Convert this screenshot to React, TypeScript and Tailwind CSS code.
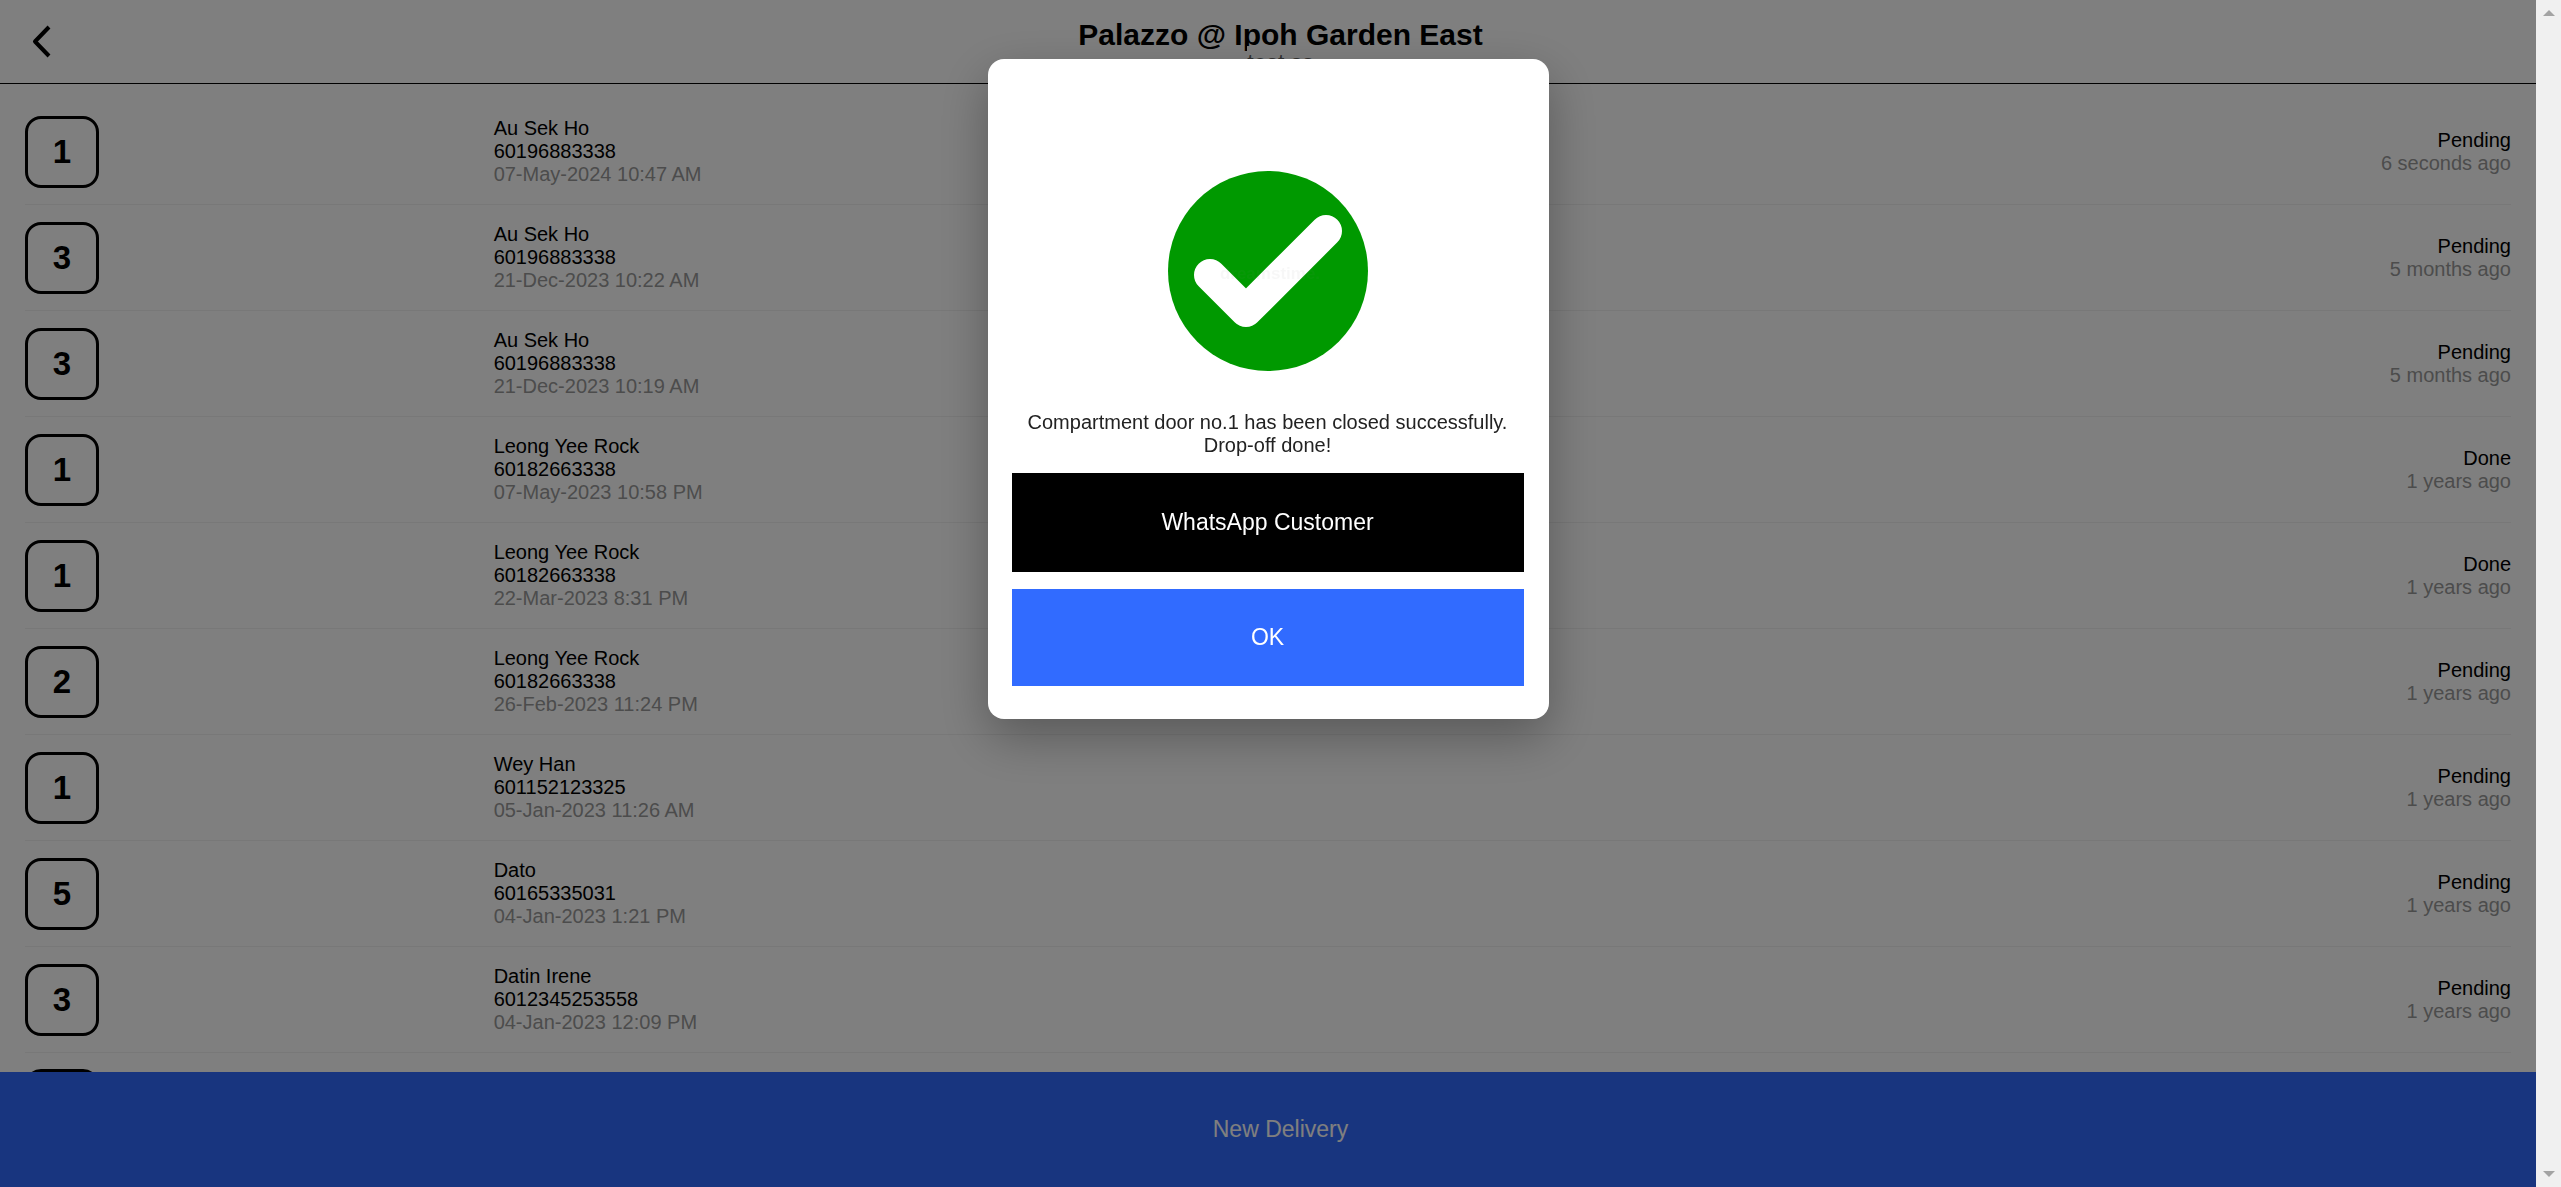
const deliveries = [
  { door: 1, name: 'Au Sek Ho', phone: '60196883338', date: '07-May-2024 10:47 AM', status: 'Pending', ago: '6 seconds ago' },
  { door: 3, name: 'Au Sek Ho', phone: '60196883338', date: '21-Dec-2023 10:22 AM', status: 'Pending', ago: '5 months ago' },
  { door: 3, name: 'Au Sek Ho', phone: '60196883338', date: '21-Dec-2023 10:19 AM', status: 'Pending', ago: '5 months ago' },
  { door: 1, name: 'Leong Yee Rock', phone: '60182663338', date: '07-May-2023 10:58 PM', status: 'Done', ago: '1 years ago' },
  { door: 1, name: 'Leong Yee Rock', phone: '60182663338', date: '22-Mar-2023 8:31 PM', status: 'Done', ago: '1 years ago' },
  { door: 2, name: 'Leong Yee Rock', phone: '60182663338', date: '26-Feb-2023 11:24 PM', status: 'Pending', ago: '1 years ago' },
  { door: 1, name: 'Wey Han', phone: '601152123325', date: '05-Jan-2023 11:26 AM', status: 'Pending', ago: '1 years ago' },
  { door: 5, name: 'Dato', phone: '60165335031', date: '04-Jan-2023 1:21 PM', status: 'Pending', ago: '1 years ago' },
  { door: 3, name: 'Datin Irene', phone: '6012345253558', date: '04-Jan-2023 12:09 PM', status: 'Pending', ago: '1 years ago' },
];

function Header() {
  return (
    <header className="relative h-21 shrink-0 w-screen border-b border-black bg-white text-center">
      <button aria-label="Back" className="absolute left-7 top-6 cursor-pointer">
        <svg width="28" height="36" viewBox="0 0 28 36" fill="none" stroke="#000" strokeWidth="4" strokeLinejoin="round">
          <path d="M21 3 L7 17.5 L21 32" />
        </svg>
      </button>
      <h1 className="pt-[18px] text-[30px] leading-[34px] font-bold">Palazzo @ Ipoh Garden East</h1>
      <p className="-mt-1.5 inline-block bg-white text-[23px] leading-[34px] text-[#666]">test ss</p>
    </header>
  );
}

function DoorBox({ door }: { door?: number }) {
  return (
    <div className="w-[74px] h-18 rounded-2xl border-3 border-black flex items-center justify-center text-[33px] font-bold">
      {door}
    </div>
  );
}

function DeliveryRow({ item }: { item: (typeof deliveries)[number] }) {
  return (
    <li className="grid grid-cols-[3fr_10fr_3fr] gap-x-1 items-center py-4 h-[106px] border-b border-[#f0f0f0]">
      <DoorBox door={item.door} />
      <div>
        <p>{item.name}</p>
        <p>{item.phone}</p>
        <p className="text-[#999]">{item.date}</p>
      </div>
      <div className="text-right">
        <p>{item.status}</p>
        <p className="text-[#999]">{item.ago}</p>
      </div>
    </li>
  );
}

function SuccessDialog() {
  return (
    <div
      role="dialog"
      aria-modal="true"
      className="w-[561px] rounded-2xl bg-white pt-28 pl-6 pr-[25px] pb-[33px] text-center shadow-[0_18px_50px_rgba(0,0,0,0.3)]"
    >
      <svg className="mx-auto" width="200" height="200" viewBox="0 0 200 200">
        <circle cx="100" cy="100" r="100" fill="#090" />
        <path d="M42 104 L78 140 L158 60" fill="none" stroke="#fff" strokeWidth="32" strokeLinecap="round" strokeLinejoin="round" />
        <text x="102" y="108" textAnchor="middle" fontSize="17" fontWeight="bold" fill="#888" opacity="0.06">
          dreamstime.
        </text>
      </svg>
      <p className="mt-10 text-[#222]">
        Compartment door no.1 has been closed successfully.
        <br />
        Drop-off done!
      </p>
      <button className="mt-4 w-full h-[99px] bg-black text-white text-[23px] cursor-pointer">WhatsApp Customer</button>
      <button className="mt-[17px] w-full h-[97px] bg-[#316bff] text-white text-[23px] cursor-pointer">OK</button>
    </div>
  );
}

function ScrollTrack() {
  return (
    <div className="fixed inset-y-0 right-0 w-[25px] bg-[#f0f0f0] flex flex-col items-center justify-between py-2.5">
      <svg width="12" height="6" viewBox="0 0 12 6" fill="#a3a3a3">
        <path d="M6 0 L12 6 H0 Z" />
      </svg>
      <svg width="12" height="6" viewBox="0 0 12 6" fill="#a3a3a3">
        <path d="M0 0 H12 L6 6 Z" />
      </svg>
    </div>
  );
}

export default function App() {
  return (
    <div className="h-screen overflow-hidden flex flex-col bg-white text-black text-[20px] leading-[23px] font-['Liberation_Sans',Arial,sans-serif]">
      <Header />
      <ul className="flex-1 min-h-0 overflow-hidden pt-[15px] pl-[25px] pr-[50px]">
        {deliveries.map((item) => (
          <DeliveryRow key={item.date} item={item} />
        ))}
        {/* next row, still loading */}
        <li className="py-4">
          <DoorBox />
        </li>
      </ul>
      <button className="h-[115px] shrink-0 w-screen bg-[#316bff] text-white text-[23px] cursor-pointer">New Delivery</button>

      <div className="fixed inset-0 bg-black/50 flex justify-center items-start pt-[59px] pr-[25px]">
        <SuccessDialog />
      </div>
      <ScrollTrack />
    </div>
  );
}
